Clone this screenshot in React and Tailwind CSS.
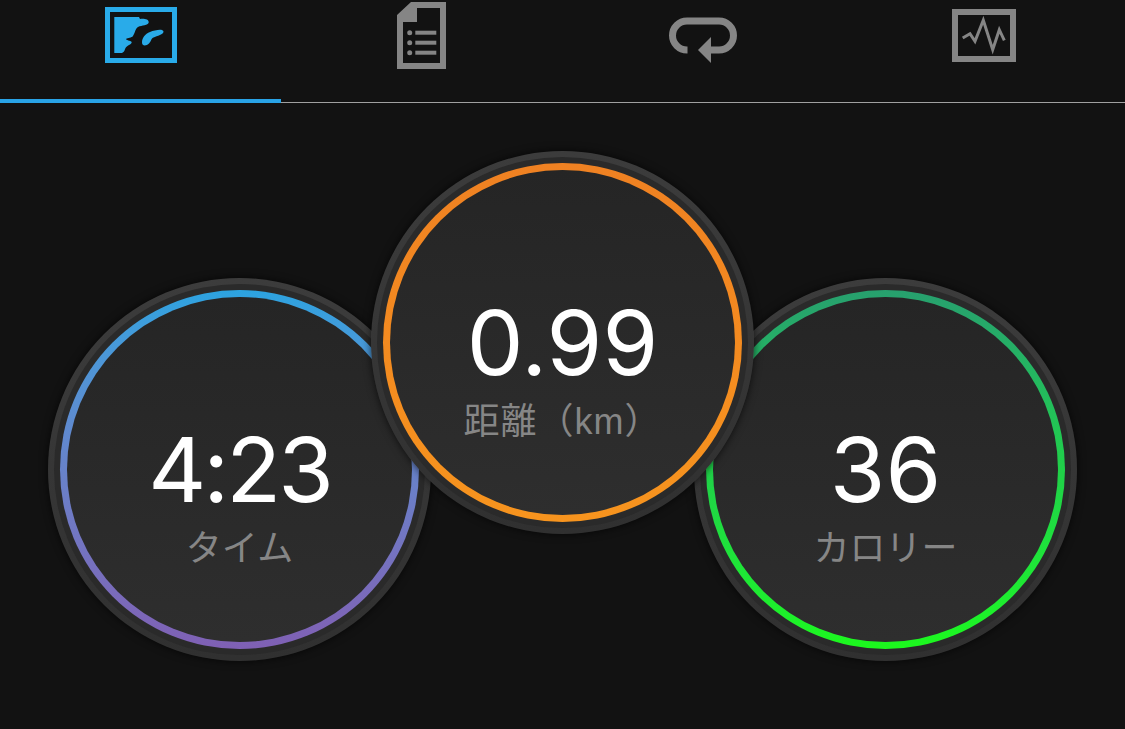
import React from "react";

const DARK = "#121212";

function MapIcon() {
  return (
    <svg width="72" height="56" viewBox="0 0 72 56">
      <rect x="2.5" y="2.5" width="67" height="51" fill="none" stroke="#29abe9" strokeWidth="5" />
      <path
        d="M9.3 10 H34 L35 12 C39 11.5 44 12 43.7 15.5 C43 18.5 37 18 33 20 C30 22 30.5 25 28 29 C26.5 31 23 30.5 21 32 C22 34 27 33.5 26.7 35.5 C26 38 22.5 38 20.5 41 C19.5 43 19.5 45 17 46 H9.3 Z"
        fill="#29abe9"
      />
      <path
        d="M58.5 24.5 C58 21.5 50 23 45 25 C40 27 37 31 37 35.5 C37 39.5 41.5 39 44 36.5 C46.5 34 45.5 32 48.5 30.5 C52 29 58.8 27.5 58.5 24.5 Z"
        fill="#29abe9"
      />
    </svg>
  );
}

function DocIcon() {
  return (
    <svg width="49" height="67" viewBox="0 0 49 67" fill="#858585">
      <path
        fillRule="evenodd"
        d="M0 13 L14 0 H49 V67 H0 Z M20 6 V20 H6 V61 H43 V6 Z"
      />
      <circle cx="12.7" cy="30.7" r="2.5" />
      <circle cx="12.7" cy="40.7" r="2.5" />
      <circle cx="12.7" cy="50.7" r="2.5" />
      <rect x="18.3" y="28.7" width="21" height="4" />
      <rect x="18.3" y="38.7" width="21" height="4" />
      <rect x="18.3" y="48.7" width="21" height="4" />
    </svg>
  );
}

function LoopIcon() {
  return (
    <svg width="68" height="46" viewBox="0 0 68 46" fill="none">
      <path
        d="M18.5 33 H18 A14.5 14.5 0 0 1 18 4 H50 A14.5 14.5 0 0 1 50 33 H38"
        stroke="#858585"
        strokeWidth="7"
      />
      <path d="M29 33 L42 20 V46 Z" fill="#858585" />
    </svg>
  );
}

function ChartIcon() {
  return (
    <svg width="64" height="53" viewBox="0 0 64 53" fill="none">
      <rect x="3" y="3" width="58" height="47" stroke="#858585" strokeWidth="6" />
      <path
        d="M10.7 29 L18 24.7 L23 32.3 L31.3 11.3 L40.7 40.7 L47.3 20.7 L52.3 31.3"
        stroke="#858585"
        strokeWidth="3"
      />
    </svg>
  );
}

function Stat({ value, label, ring, className, valueClass, labelClass }) {
  return (
    <div
      className={`w-[383px] h-[383px] shrink-0 rounded-full p-[6px] bg-linear-to-b from-[#3c3c3c] to-[#303030] shadow-[0_0_8px_rgba(0,0,0,0.7)] ${className}`}
    >
      <div className="w-full h-full rounded-full p-[6px] bg-[#2a2a2a]">
        <div className={`w-full h-full rounded-full p-[7px] ${ring}`}>
          <div className="w-full h-full rounded-full bg-linear-to-b from-[#252525] to-[#2e2e2e] flex flex-col items-center pt-[128px]">
            <div className={`text-white text-[90px] leading-[90px] font-['Inter',sans-serif] ${valueClass}`}>
              {value}
            </div>
            <div className={`mt-[12px] text-[#868686] text-[36px] leading-[44px] font-['Liberation_Sans','Noto_Sans_CJK_JP',sans-serif] ${labelClass}`}>
              {label}
            </div>
          </div>
        </div>
      </div>
    </div>
  );
}

export default function App() {
  return (
    <div className="min-h-screen overflow-hidden" style={{ background: DARK }}>
      {/* Tabs */}
      <div className="flex h-[103px] border-b border-[#a0a0a0]">
        <div className="w-1/4 flex justify-center pt-[7px] border-b-4 border-[#29a3e6] -mb-px">
          <div><MapIcon /></div>
        </div>
        <div className="w-1/4 flex justify-center pt-[2px]">
          <div><DocIcon /></div>
        </div>
        <div className="w-1/4 flex justify-center pt-[17px]">
          <div><LoopIcon /></div>
        </div>
        <div className="w-1/4 flex justify-center pt-[9px]">
          <div><ChartIcon /></div>
        </div>
      </div>

      {/* Stats */}
      <div className="flex items-start pl-[48px]">
        <Stat
          value="4:23"
          label="タイム"
          valueClass="tracking-[-3px]"
          ring="bg-linear-to-b from-[#2ba3e0] to-[#7f60b4]"
          className="mt-[175px]"
        />
        <Stat
          value="0.99"
          label="距離（km）"
          labelClass="tracking-[1px]"
          ring="bg-linear-to-b from-[#ef8122] to-[#f7941e]"
          className="relative z-10 mt-[48px] -ml-[60px]"
        />
        <Stat
          value="36"
          label="カロリー"
          ring="bg-linear-to-b from-[#27a06e] via-[#20d048] to-[#1cf81c]"
          className="mt-[175px] -ml-[60px]"
        />
      </div>
    </div>
  );
}
